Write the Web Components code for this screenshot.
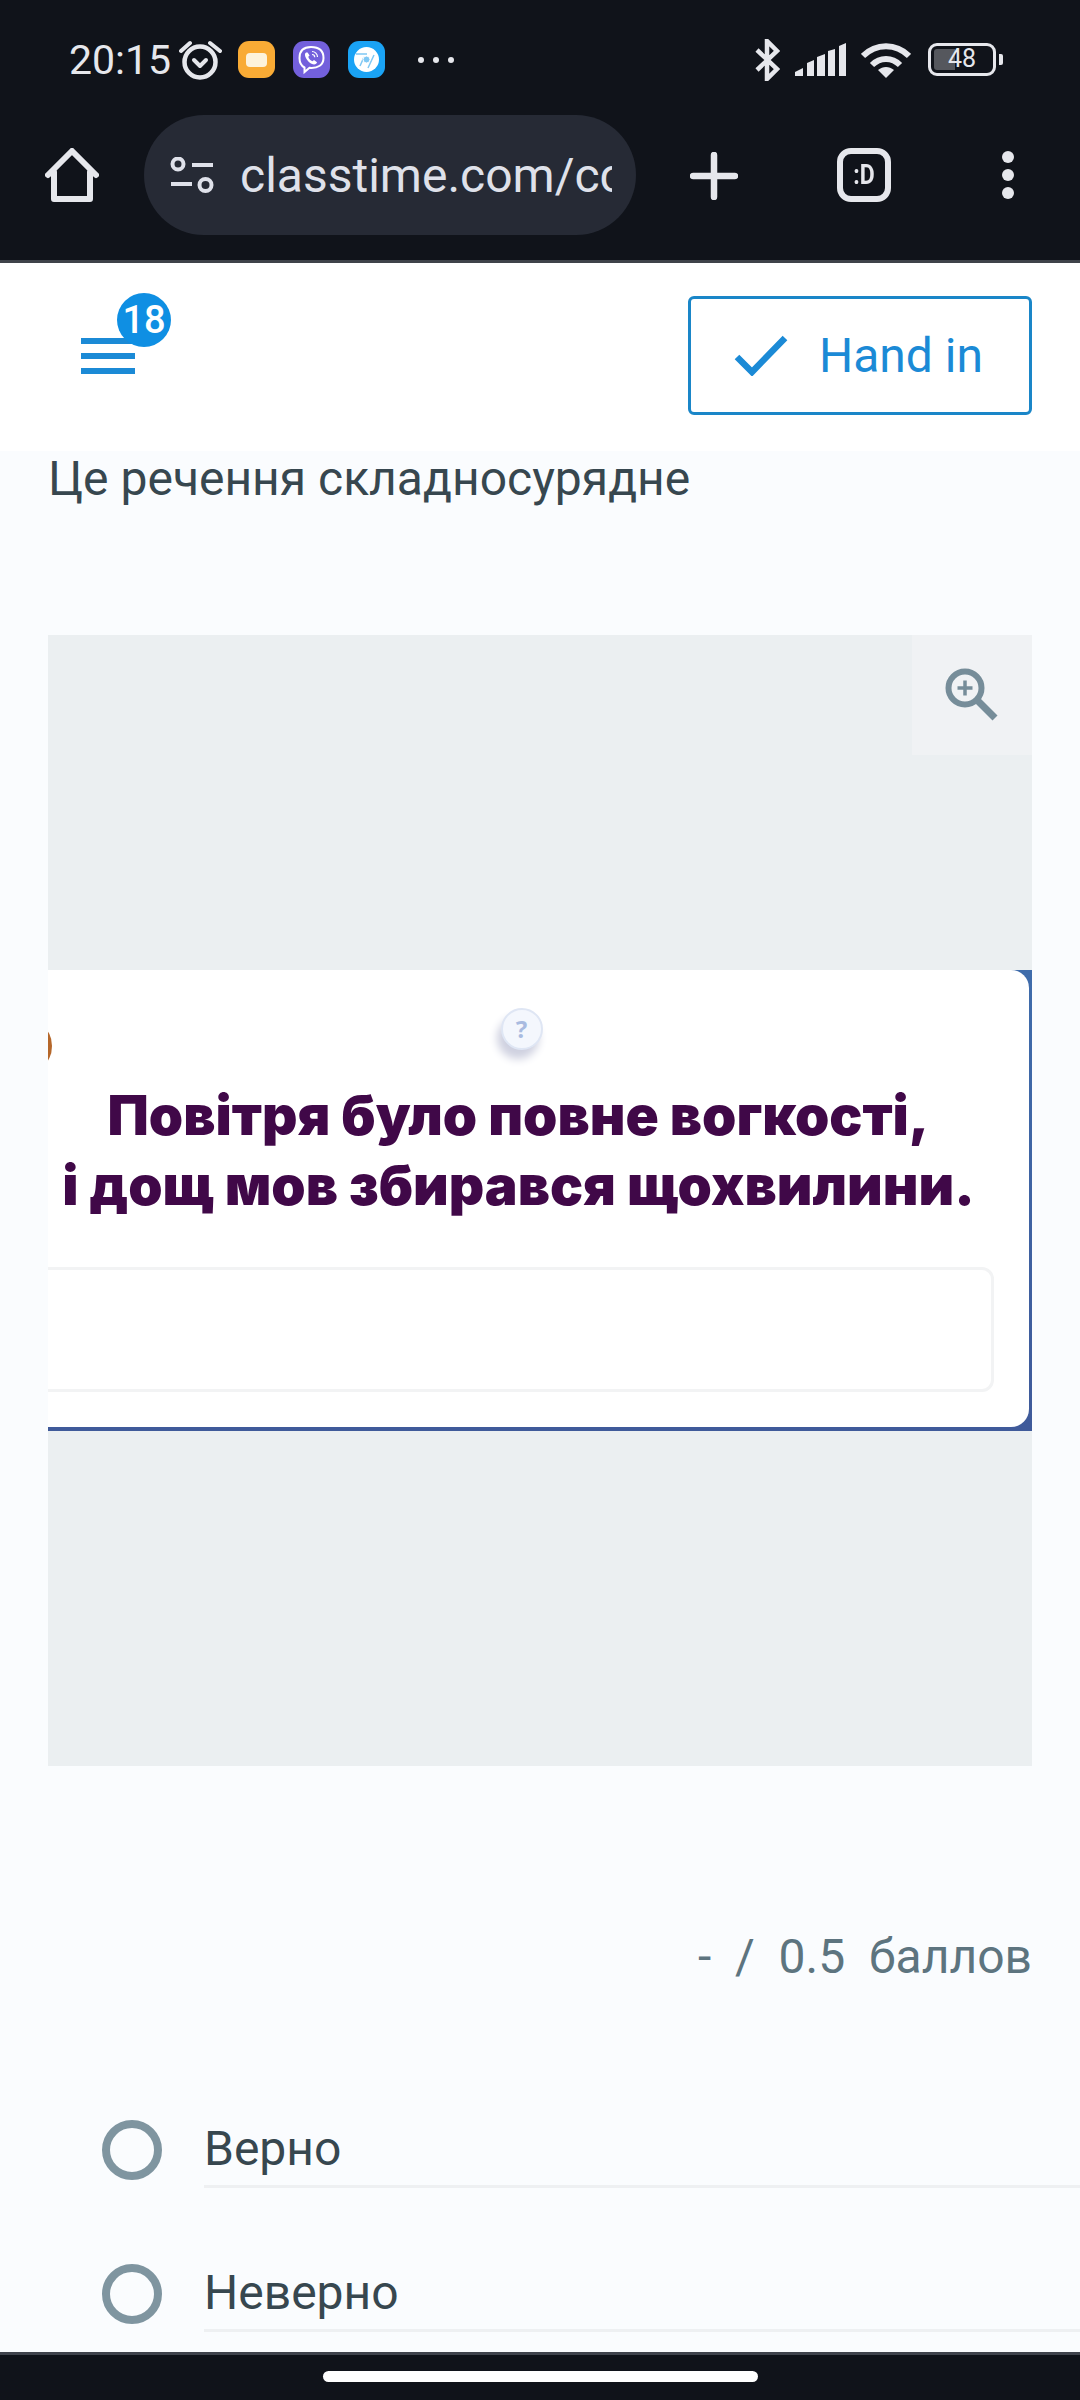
<!DOCTYPE html>
<html lang="uk">
<head>
<meta charset="utf-8">
<title>Classtime</title>
<style>
  html, body { margin: 0; padding: 0; background: #fafcfe; }
  body { width: 1080px; height: 2400px; overflow: hidden; display: flex; flex-direction: column; font-family: Roboto, "Noto Sans", sans-serif; }
  main-pane { flex: 1; }
</style>
</head>
<body>
<browser-chrome></browser-chrome>
<app-header count="18" label="Hand in"></app-header>
<main-pane>
  <question-text>Це речення складносурядне</question-text>
  <zoom-figure>
    <quiz-picture></quiz-picture>
  </zoom-figure>
  <points-line>-  /  0.5  баллов</points-line>
  <radio-option>Верно</radio-option>
  <radio-option>Неверно</radio-option>
</main-pane>
<nav-handle></nav-handle>
<script>
// --- Phone status bar + browser toolbar ---
class BrowserChrome extends HTMLElement {
  constructor() {
    super();
    this.attachShadow({ mode: 'open' });
  }
  connectedCallback() {
    this.shadowRoot.innerHTML = `
      <style>
        :host { display: block; background: #10131a; border-bottom: 3px solid #3f434a; color: #e6e7ec; font-family: Roboto, sans-serif; }
        svg { display: block; flex: none; }
        .status { height: 115px; box-sizing: border-box; padding: 4px 0 0 69px; display: flex; align-items: center; }
        .time { font-size: 41px; width: 103px; line-height: 46px; }
        .alarm { margin-left: 7px; }
        .app { margin-left: 16px; }
        .app + .app { margin-left: 18px; }
        .more { margin-left: 33px; }
        .right { margin-left: auto; margin-right: 77px; display: flex; align-items: center; }
        .bt { margin-right: 14px; }
        .signal { margin-right: 14px; }
        .wifi { margin-right: 17px; }
        .battery { display: flex; align-items: center; gap: 3px; }
        .cell { width: 68px; height: 33px; box-sizing: border-box; border: 3.5px solid #e6e7ec; border-radius: 9px; padding: 3px; font-size: 25px; line-height: 20px; text-align: center;
          background: linear-gradient(to right, #55575d 0 38%, transparent 38%) content-box; }
        .tip { width: 4px; height: 11px; background: #e6e7ec; border-radius: 0 2px 2px 0; }
        .tools { height: 145px; display: flex; align-items: flex-start; padding-left: 45px; }
        .home { margin-top: 33px; }
        .pill { margin-left: 45px; width: 492px; height: 120px; box-sizing: border-box; border-radius: 60px; background: #262a35; display: flex; align-items: center; padding-left: 26px; }
        .url { margin-left: 26px; width: 372px; overflow: hidden; white-space: nowrap; font-size: 48px; line-height: 60px; padding-top: 2px; color: #dfe1ea; }
        .plus { margin: 37px 0 0 54px; }
        .tabs { margin: 33px 0 0 99px; width: 54px; height: 54px; box-sizing: border-box; border: 6px solid #e6e7ec; border-radius: 14px; display: flex; align-items: center; justify-content: center; font: 700 28px/30px Roboto, sans-serif; }
        .tabs span { display: block; transform: scaleX(.82); }
        .menu { margin: 36px 0 0 111px; }
      </style>
      <div class="status">
        <span class="time">20:15</span>
        <svg class="alarm" width="43" height="40" viewBox="179 38 43 40" fill="none" stroke="#e6e7ec">
          <circle cx="200" cy="60" r="15.5" stroke-width="4.5"/>
          <path d="M194 58l6 6 6-6" stroke-width="4" stroke-linecap="round" stroke-linejoin="round"/>
          <path d="M181 49l9-8M210 41l10 8" stroke-width="4" stroke-linecap="round"/>
        </svg>
        <svg class="app" width="37" height="37" viewBox="0 0 37 37">
          <rect width="37" height="37" rx="11" fill="#f9ab35"/>
          <rect x="8" y="12" width="21" height="14" rx="4" fill="#fdf3dc"/>
        </svg>
        <svg class="app" width="37" height="37" viewBox="0 0 37 37">
          <rect width="37" height="37" rx="11" fill="#7360dc"/>
          <path d="M18 6C10 6 6.500 10 6.500 17c0 5 2 8 5 9.500V31l5-4.200C25 27.500 30.500 24 30.500 17 30.500 10 26 6 18 6z" fill="none" stroke="#fff" stroke-width="2"/>
          <path d="M13 11.500c-1.500 1-1.500 3 .5 6.500 2 3 5 5.500 7.500 5.500 1.500 0 3-1.200 3-2.300l-3-2.200-1.500 1.200c-2 -.5-3.800-2.500-4.200-4.400l1.300-1.300-2-3z" fill="#fff"/>
          <path d="M19 10.500c3 0 5.500 2.500 5.500 5.500M19 13.500c1.500 0 2.700 1.200 2.700 2.700" fill="none" stroke="#fff" stroke-width="1.200"/>
        </svg>
        <svg class="app" width="37" height="37" viewBox="0 0 37 37">
          <rect width="37" height="37" rx="11" fill="#1aa3f5"/>
          <circle cx="18.500" cy="18.500" r="12.500" fill="#fff"/>
          <path d="M8 13h11M26 14l-6 13M12 25l4-9" stroke="#7fc8f4" stroke-width="1.500" fill="none"/>
          <circle cx="18.500" cy="18.500" r="3.500" fill="#7fc8f4" stroke="#fff" stroke-width="1"/>
        </svg>
        <svg class="more" width="36" height="6" viewBox="0 0 36 6" fill="#e6e7ec">
          <circle cx="3" cy="3" r="3"/><circle cx="18" cy="3" r="3"/><circle cx="33" cy="3" r="3"/>
        </svg>
        <div class="right">
          <svg class="bt" width="27" height="42" viewBox="0 0 27 42" fill="none" stroke="#e6e7ec" stroke-width="4.500">
            <path d="M3 11l20 19-10 10V2l10 10L3 31"/>
          </svg>
          <svg class="signal" width="52" height="33" viewBox="0 0 52 33" fill="#e6e7ec">
            <path d="M0 33v-4l8-4v8zM12 33V20l7-3v16zM22 33V14l8-3v22zM33 33V8l7-2v27zM44 33V3l7-3v33z"/>
          </svg>
          <svg class="wifi" width="50" height="36" viewBox="0 0 50 36" fill="none" stroke="#e6e7ec" stroke-width="6">
            <path d="M2 14C15 1 35 1 48 14M11 23C19 15 31 15 39 23"/>
            <path d="M25 36l-8-8c5-4 11-4 16 0z" fill="#e6e7ec" stroke="none"/>
          </svg>
          <div class="battery"><div class="cell">48</div><div class="tip"></div></div>
        </div>
      </div>
      <div class="tools">
        <svg class="home" width="54" height="54" viewBox="0 0 54 54" fill="none" stroke="#e6e7ec" stroke-width="6" stroke-linejoin="round" stroke-linecap="round">
          <path d="M3 27L27 3l24 24M9 24v27h36V24"/>
        </svg>
        <div class="pill">
          <svg width="44" height="36" viewBox="170 157 44 36" fill="none" stroke="#dfe1ea" stroke-width="4">
            <circle cx="178" cy="164" r="5.500"/><circle cx="205.500" cy="185" r="6"/>
            <path d="M192 165h21M171 184h21"/>
          </svg>
          <span class="url">classtime.com/cc</span>
        </div>
        <svg class="plus" width="48" height="48" viewBox="0 0 48 48" stroke="#e6e7ec" stroke-width="6.500" stroke-linecap="round">
          <path d="M24 3v42M3 24h42"/>
        </svg>
        <div class="tabs"><span>:D</span></div>
        <svg class="menu" width="12" height="48" viewBox="0 0 12 48" fill="#e6e7ec">
          <circle cx="6" cy="6" r="6"/><circle cx="6" cy="24" r="6"/><circle cx="6" cy="42" r="6"/>
        </svg>
      </div>
    `;
  }
}
customElements.define('browser-chrome', BrowserChrome);

// --- Classtime header ---
class AppHeader extends HTMLElement {
  constructor() {
    super();
    this.attachShadow({ mode: 'open' });
  }
  connectedCallback() {
    const count = this.getAttribute('count') || '';
    const label = this.getAttribute('label') || '';
    this.shadowRoot.innerHTML = `
      <style>
        :host { display: flex; height: 184px; background: #fff; align-items: center; justify-content: space-between; padding: 0 48px 4px 81px; position: relative; z-index: 1; font-family: Roboto, sans-serif; }
        .burger { position: relative; width: 54px; display: flex; flex-direction: column; gap: 9px; top: 1px; }
        .burger i { display: block; height: 6px; background: #1b8ad6; }
        .badge { position: absolute; left: 36px; top: -45px; width: 54px; height: 54px; border-radius: 50%; background: #0f8fe3; color: #fff; font-size: 38px; font-weight: 500; line-height: 54px; text-align: center; }
        .submit { width: 344px; height: 119px; box-sizing: border-box; border: 3.5px solid #1a86c8; border-radius: 6px; display: flex; align-items: center; padding-left: 43px; gap: 31px; color: #1b8ad6; font-size: 48px; }
      </style>
      <div class="burger"><i></i><i></i><i></i><span class="badge">${count}</span></div>
      <div class="submit">
        <svg width="54" height="42" viewBox="0 0 54 42" fill="none" stroke="#1b8ad6" stroke-width="6.500"><path d="M3 23l15 15L51 4"/></svg>
        <span>${label}</span>
      </div>
    `;
  }
}
customElements.define('app-header', AppHeader);

// --- Scrolling content ---
class MainPane extends HTMLElement {
  constructor() {
    super();
    this.attachShadow({ mode: 'open' });
  }
  connectedCallback() {
    this.shadowRoot.innerHTML = `
      <style>
        :host { display: block; overflow: hidden; background: #fafcfe; color: #37474f; font-family: Roboto, sans-serif; font-size: 48px; line-height: 60px; }
      </style>
      <slot></slot>
    `;
  }
}
customElements.define('main-pane', MainPane);

class QuestionText extends HTMLElement {
  constructor() {
    super();
    this.attachShadow({ mode: 'open' });
  }
  connectedCallback() {
    this.shadowRoot.innerHTML = `
      <style>
        :host { display: block; margin: -2px 48px 0; }
      </style>
      <slot></slot>
    `;
  }
}
customElements.define('question-text', QuestionText);

class ZoomFigure extends HTMLElement {
  constructor() {
    super();
    this.attachShadow({ mode: 'open' });
  }
  connectedCallback() {
    this.shadowRoot.innerHTML = `
      <style>
        :host { display: flex; align-items: center; position: relative; height: 1131px; margin: 126px 48px 0; background: #ebeff1; overflow: hidden; }
        .zoom { position: absolute; right: 0; top: 0; width: 120px; height: 120px; background: #f0f2f4; display: flex; align-items: center; justify-content: center; }
        ::slotted(*) { flex: 1; }
      </style>
      <slot></slot>
      <div class="zoom">
        <svg width="54" height="54" viewBox="0 0 54 54" fill="none" stroke="#768d99">
          <circle cx="20" cy="20" r="16.500" stroke-width="6"/>
          <path d="M31 31l19 19" stroke-width="7"/>
          <path d="M20 12.500v15M12.500 20h15" stroke-width="3.500"/>
        </svg>
      </div>
    `;
  }
}
customElements.define('zoom-figure', ZoomFigure);

// the photo in the question: a card cropped by the figure
class QuizPicture extends HTMLElement {
  constructor() {
    super();
    this.attachShadow({ mode: 'open' });
  }
  connectedCallback() {
    this.shadowRoot.innerHTML = `
      <style>
        :host { display: block; background: linear-gradient(#3f6cab, #3f5a9a); padding: 0 3px 4px 0; }
        .card { position: relative; height: 457px; box-sizing: border-box; padding: 38px 40px 0 0; background: #fff; border-radius: 0 18px 18px 0; overflow: hidden; display: flex; flex-direction: column; align-items: center; }
        .coin { position: absolute; left: -14px; top: 59px; width: 18px; height: 34px; border-radius: 50%; background: #b5672a; }
        .token { width: 38px; height: 38px; margin-left: 6px; border-radius: 50%; background: #f4f7fd; border: 2px solid #dfe6f4; box-shadow: -4px 9px 9px #cfd1e0; color: #a9bbe0; font: 700 24px/38px "Noto Sans", sans-serif; text-align: center; flex: none; }
        .title { margin-top: 30px; color: #400848; font: 900 55px/70px Inter, "Noto Sans", sans-serif; text-align: center; white-space: nowrap; filter: blur(.5px); }
        .field { align-self: stretch; margin: 47px -5px 0 -30px; height: 125px; box-sizing: border-box; border: 3px solid #f2f3f4; border-radius: 12px; flex: none; }
      </style>
      <div class="card">
        <div class="coin"></div>
        <div class="token">?</div>
        <div class="title">Повітря було повне вогкості,<br>і дощ мов збирався щохвилини.</div>
        <div class="field"></div>
      </div>
    `;
  }
}
customElements.define('quiz-picture', QuizPicture);

class PointsLine extends HTMLElement {
  constructor() {
    super();
    this.attachShadow({ mode: 'open' });
  }
  connectedCallback() {
    this.shadowRoot.innerHTML = `
      <style>
        :host { display: block; margin: 161px 48px 57px; text-align: right; color: #5d747f; }
        div { white-space: pre; }
      </style>
      <div><slot></slot></div>
    `;
  }
}
customElements.define('points-line', PointsLine);

class RadioOption extends HTMLElement {
  constructor() {
    super();
    this.attachShadow({ mode: 'open' });
  }
  connectedCallback() {
    this.shadowRoot.innerHTML = `
      <style>
        :host { display: flex; align-items: flex-start; gap: 42px; padding-left: 102px; }
        .dot { width: 60px; height: 60px; box-sizing: border-box; border: 8px solid #7f95a0; border-radius: 50%; margin-top: 76px; flex: none; }
        .body { flex: 1; padding: 75px 0 6px; border-bottom: 3px solid #eef0f2; }
      </style>
      <div class="dot"></div>
      <div class="body"><slot></slot></div>
    `;
  }
}
customElements.define('radio-option', RadioOption);

class NavHandle extends HTMLElement {
  constructor() {
    super();
    this.attachShadow({ mode: 'open' });
  }
  connectedCallback() {
    this.shadowRoot.innerHTML = `
      <style>
        :host { display: flex; justify-content: center; box-sizing: border-box; height: 48px; padding-top: 16px; background: #10131a; border-top: 3px solid #3f434c; position: relative; }
        div { width: 435px; height: 11px; border-radius: 6px; background: #fff; }
      </style>
      <div></div>
    `;
  }
}
customElements.define('nav-handle', NavHandle);
</script>
</body>
</html>
